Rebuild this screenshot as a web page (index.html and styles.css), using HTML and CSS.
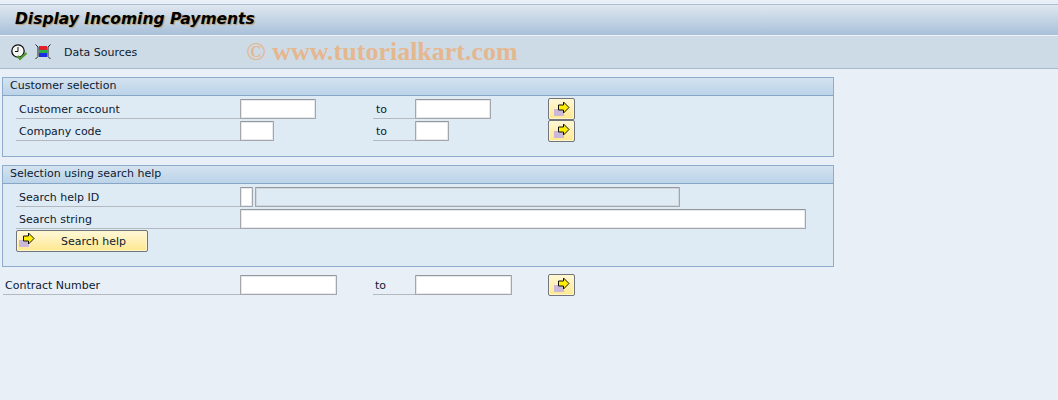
FILE: index.html
```html
<html>
    <head>
        <title>Display Incoming Payments</title>
        <link rel="stylesheet" href="styles.css">
    </head>
    <body>
        <div class="titlebar"><h1>Display Incoming Payments</h1></div>
        <div class="toolbar">
            <svg class="tool" width="17" height="17" viewBox="0 0 17 17">
                <circle cx="7" cy="7" r="6.2" fill="#f4f6f4" stroke="#111" stroke-width="1.3"/>
                <path d="M7 3V7.5H4" fill="none" stroke="#111" stroke-width="1"/>
                <path d="M6.5 12L9 15L15.5 9" fill="none" stroke="#4f9a2e" stroke-width="2.2"/>
            </svg>
            <svg class="tool" width="16" height="16" viewBox="0 0 16 16">
                <path d="M0.5 0.5L3 3V12.5L0.5 15M15.5 0.5L13 3V12.5L15.5 15" fill="none" stroke="#222" stroke-width="1"/>
                <rect x="4" y="2" width="8" height="4" fill="#e0202a"/>
                <rect x="4" y="6" width="8" height="3" fill="#27b04a"/>
                <rect x="4" y="9" width="8" height="4" fill="#1a2fe0"/>
            </svg>
            <span class="toollabel">Data Sources</span>
            <span class="watermark">© www.tutorialkart.com</span>
        </div>

        <div class="panel first">
            <div class="panelhead">Customer selection</div>
            <div class="panelbody">
                <div class="row">
                    <label>Customer account</label>
                    <div class="cell"><input class="w76" type="text"></div>
                    <label class="to">to</label>
                    <div class="cell"><input class="w76" type="text"></div>
                    <button class="arrowbtn"><svg width="16" height="16" viewBox="0 0 16 16"><use href="#arrow"/></svg></button>
                </div>
                <div class="row">
                    <label>Company code</label>
                    <div class="cell"><input class="w34" type="text"></div>
                    <label class="to">to</label>
                    <div class="cell"><input class="w34" type="text"></div>
                    <button class="arrowbtn"><svg width="16" height="16" viewBox="0 0 16 16"><use href="#arrow"/></svg></button>
                </div>
            </div>
        </div>

        <div class="panel second">
            <div class="panelhead">Selection using search help</div>
            <div class="panelbody">
                <div class="row wide">
                    <label>Search help ID</label>
                    <div class="cell"><input class="w13" type="text"><input class="w425 off" type="text" disabled></div>
                </div>
                <div class="row wide">
                    <label>Search string</label>
                    <div class="cell"><input class="w566" type="text"></div>
                </div>
                <button class="searchbtn">
                    <svg width="16" height="16" viewBox="0 0 16 16"><use href="#arrow"/></svg>
                    <span>Search help</span>
                </button>
            </div>
        </div>

        <div class="row contract">
            <label>Contract Number</label>
            <div class="cell"><input class="w97" type="text"></div>
            <label class="to">to</label>
            <div class="cell"><input class="w97" type="text"></div>
            <button class="arrowbtn"><svg width="16" height="16" viewBox="0 0 16 16"><use href="#arrow"/></svg></button>
        </div>

        <svg width="0" height="0" class="defs">
            <g id="arrow">
                <rect x="0" y="8" width="10" height="7" fill="#cbb8d8"/>
                <path d="M4.5 4H9.5V1L15 6.5L9.5 12V9H4.5Z" fill="#ffee00" stroke="#111" stroke-width="1"/>
            </g>
        </svg>
    </body>
</html>
```

FILE: styles.css
```css
*{
    margin: 0;
    padding: 0;
    box-sizing: border-box;
}
body{
    background: #e9eff6;
    font-family: "DejaVu Sans", sans-serif;
    font-size: 11px;
    color: #0c1a30;
    padding-top: 4px;
    overflow: hidden;
}
.defs{
    position: absolute;
}
.titlebar{
    height: 32px;
    border-top: 1px solid #a9bed4;
    border-bottom: 1px solid #f0f4f8;
    background: linear-gradient(#dfe7f0, #a8c0d9);
    padding: 0 0 2px 15px;
    display: flex;
    align-items: center;
}
h1{
    font-size: 15.5px;
    font-style: italic;
    font-weight: bold;
    color: #000;
    text-shadow: 1px 1px 1px #b89a70;
}
.toolbar{
    height: 33px;
    background: #cddbe7;
    border-bottom: 1px solid #a9b9c9;
    padding-left: 11px;
    display: flex;
    align-items: center;
    gap: 7px;
}
.toollabel{
    margin-left: 6px;
}
.watermark{
    margin-left: 102px;
    font-family: "Liberation Serif", serif;
    font-size: 26px;
    font-weight: bold;
    color: #e5b78f;
    white-space: nowrap;
}
.panel{
    width: 832px;
    margin-left: 2px;
    border: 1px solid #8dacce;
    background: #deeaf4;
}
.first{
    margin-top: 8px;
    height: 80px;
}
.second{
    margin-top: 8px;
    height: 102px;
}
.panelhead{
    height: 18px;
    padding-left: 7px;
    line-height: 16px;
    background: linear-gradient(#d3e2f0, #bcd3e8);
    border-bottom: 1px solid #86a6c8;
}
.panelbody{
    padding: 3px 0 0 13px;
}
.row{
    display: grid;
    grid-template-columns: 224px 133px 42px 133px auto;
    height: 22px;
    align-items: start;
    justify-content: start;
}
.wide{
    grid-template-columns: 224px auto;
}
label{
    height: 20px;
    line-height: 22px;
    padding-left: 3px;
    border-bottom: 1px solid #b4b9bf;
}
.cell{
    display: flex;
    gap: 2px;
}
input{
    height: 20px;
    background: #fff;
    border: 1px solid #a3a6aa;
    border-top-color: #94979b;
    border-radius: 1px;
    box-shadow: inset 0 0 0 1px #e6e8ec;
    outline: none;
}
.off{
    background: #deeaf4;
    box-shadow: inset 0 0 0 1px #cfd6dc;
}
.w13{ width: 13px; }
.w34{ width: 34px; }
.w76{ width: 76px; }
.w97{ width: 97px; }
.w425{ width: 425px; }
.w566{ width: 566px; }
.arrowbtn{
    width: 27px;
    height: 22px;
    margin-top: -1px;
    background: linear-gradient(#fff8d8, #ffe88f);
    border: 1px solid #70757c;
    border-radius: 2px;
    box-shadow: inset 0 0 0 1px #fff6cc;
    display: flex;
    align-items: center;
    justify-content: center;
}
.searchbtn{
    width: 132px;
    height: 22px;
    margin-top: -1px;
    background: linear-gradient(#fff8d8, #ffe88f);
    border: 1px solid #70757c;
    border-radius: 2px;
    box-shadow: inset 0 0 0 1px #fff6cc;
    display: flex;
    align-items: flex-start;
    padding: 1px 0 0 2px;
    font-family: "DejaVu Sans", sans-serif;
    font-size: 11px;
    color: #0c1a30;
}
.searchbtn span{
    margin-left: 26px;
    align-self: center;
    margin-top: -1px;
}
.contract{
    margin-top: 8px;
    margin-left: 3px;
    grid-template-columns: 237px 133px 42px 133px auto;
}
.contract label{
    padding-left: 2px;
}
```
